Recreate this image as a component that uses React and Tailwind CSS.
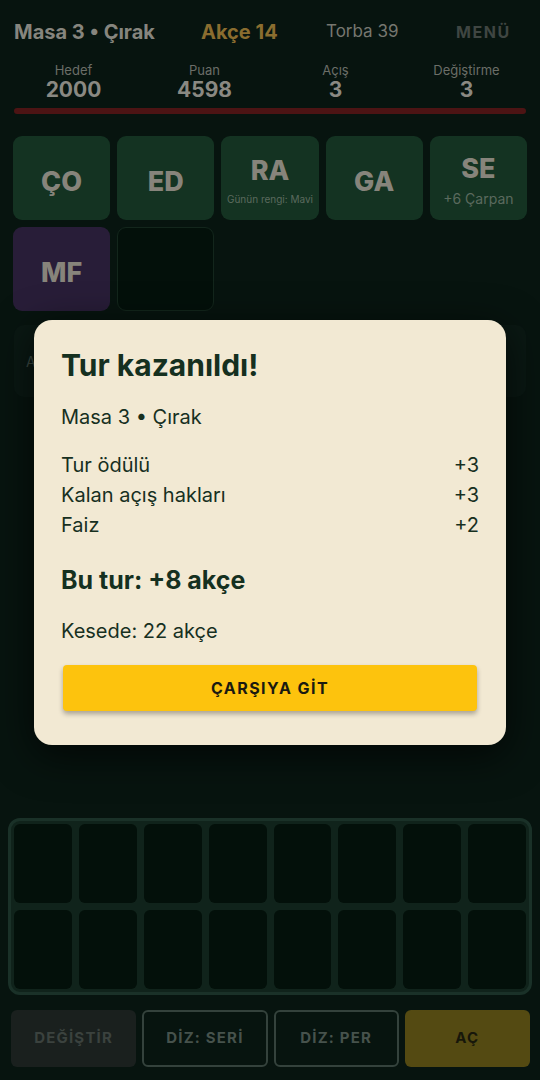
import React from 'react';

const font = { fontFamily: '"Inter", "Noto Sans", sans-serif' };

function Tile({ label, sub, variant = 'green' }) {
    const bg =
        variant === 'purple'
            ? 'bg-[#281d38]'
            : variant === 'empty'
            ? 'bg-[#03100a] border border-[#13261c]'
            : 'bg-[#143322]';
    return (
        <div className={`h-[84px] rounded-[9px] flex flex-col items-center justify-center ${bg}`}>
            {label && <span className={`text-[27px] font-extrabold text-[#87847b] leading-none ${sub ? 'mt-1' : 'mt-[6px]'}`}>{label}</span>}
            {sub && <span className={`text-[#5b6a5e] mt-[10px] leading-none ${sub.length > 12 ? 'text-[10px]' : 'text-[14px]'}`}>{sub}</span>}
        </div>
    );
}

function Stat({ label, value }) {
    return (
        <div className="flex flex-col items-center">
            <span className="text-[13px] text-[#6b6e68] leading-[16px]">{label}</span>
            <span className="text-[21px] font-bold text-[#8a8982] leading-[24px]">{value}</span>
        </div>
    );
}

function Row({ label, value }) {
    return (
        <div className="flex justify-between text-[20px] leading-[30px] text-[#17301f]">
            <span>{label}</span>
            <span>{value}</span>
        </div>
    );
}

export default function App() {
    const cells = Array.from({ length: 16 });
    return (
        <div className="relative w-[540px] h-[1080px] bg-[#07140f] overflow-hidden" style={font}>
            <div className="flex items-center px-[14px] pt-[20px] h-[44px]">
                <span className="text-[20px] font-bold text-[#86857e] w-[187px]">Masa 3 • Çırak</span>
                <span className="text-[20px] font-bold text-[#8a6d2f] w-[125px]">Akçe 14</span>
                <span className="text-[17px] text-[#76776f] w-[130px]">Torba 39</span>
                <span className="text-[16px] font-bold text-[#3f4642] tracking-[0.1em]">MENÜ</span>
            </div>
            <div className="grid grid-cols-4 px-[8px] mt-[18px]">
                <Stat label="Hedef" value="2000" />
                <Stat label="Puan" value="4598" />
                <Stat label="Açış" value="3" />
                <Stat label="Değiştirme" value="3" />
            </div>
            <div className="mx-[14px] mt-[6px] h-[6px] rounded-full bg-[#4c1414]" />

            <div className="grid grid-cols-5 gap-[7px] px-[13px] mt-[22px]">
                <Tile label="ÇO" />
                <Tile label="ED" />
                <Tile label="RA" sub="Günün rengi: Mavi" />
                <Tile label="GA" />
                <Tile label="SE" sub="+6 Çarpan" />
                <Tile label="MF" variant="purple" />
                <Tile variant="empty" />
            </div>

            <div className="mx-[14px] mt-[14px] h-[72px] rounded-[10px] bg-[#0a1813] flex items-center px-[12px]">
                <span className="text-[14px] text-[#3c4a43]">Açılan el yok</span>
            </div>

            <div className="absolute left-[8px] right-[8px] top-[818px] rounded-[12px] border-[3px] border-[#1a3128] bg-[#10231b] p-[3px]">
                <div className="grid grid-cols-8 gap-[7px]">
                    {cells.map((_, i) => (
                        <div key={i} className="h-[79px] rounded-[6px] bg-[#03100a]" />
                    ))}
                </div>
            </div>

            <div className="absolute left-[11px] right-[10px] top-[1010px] grid grid-cols-4 gap-[6px]">
                <button className="h-[57px] rounded-[6px] bg-[#1a201e] text-[15px] font-bold tracking-[0.08em] text-[#3b423e]">DEĞİŞTİR</button>
                <button className="h-[57px] rounded-[6px] border-2 border-[#34423c] text-[15px] font-bold tracking-[0.08em] text-[#46524c]">DİZ: SERİ</button>
                <button className="h-[57px] rounded-[6px] border-2 border-[#34423c] text-[15px] font-bold tracking-[0.08em] text-[#46524c]">DİZ: PER</button>
                <button className="h-[57px] rounded-[6px] bg-[#544a12] text-[15px] font-bold tracking-[0.08em] text-[#17170a]">AÇ</button>
            </div>

            <div className="absolute left-[34px] top-[320px] w-[472px] h-[425px] rounded-[18px] bg-[#f2e9d3] shadow-[0_10px_40px_rgba(0,0,0,0.7)] px-[27px] pt-[26px]">
                <h2 className="text-[30px] font-bold text-[#15301f] leading-[38px]">Tur kazanıldı!</h2>
                <p className="text-[20px] text-[#17301f] mt-[20px] leading-[26px]">Masa 3 • Çırak</p>
                <div className="mt-[20px]">
                    <Row label="Tur ödülü" value="+3" />
                    <Row label="Kalan açış hakları" value="+3" />
                    <Row label="Faiz" value="+2" />
                </div>
                <p className="text-[25px] font-bold text-[#15301f] mt-[25px] leading-[30px]">Bu tur: +8 akçe</p>
                <p className="text-[20px] text-[#17301f] mt-[23px] leading-[26px]">Kesede: 22 akçe</p>
                <button className="mt-[21px] ml-[2px] w-[414px] h-[46px] rounded-[4px] bg-[#fdc30d] shadow-[0_3px_5px_rgba(0,0,0,0.3)] text-[16px] font-bold tracking-[0.09em] text-[#1a1a10]">ÇARŞIYA GİT</button>
            </div>
        </div>
    );
}
